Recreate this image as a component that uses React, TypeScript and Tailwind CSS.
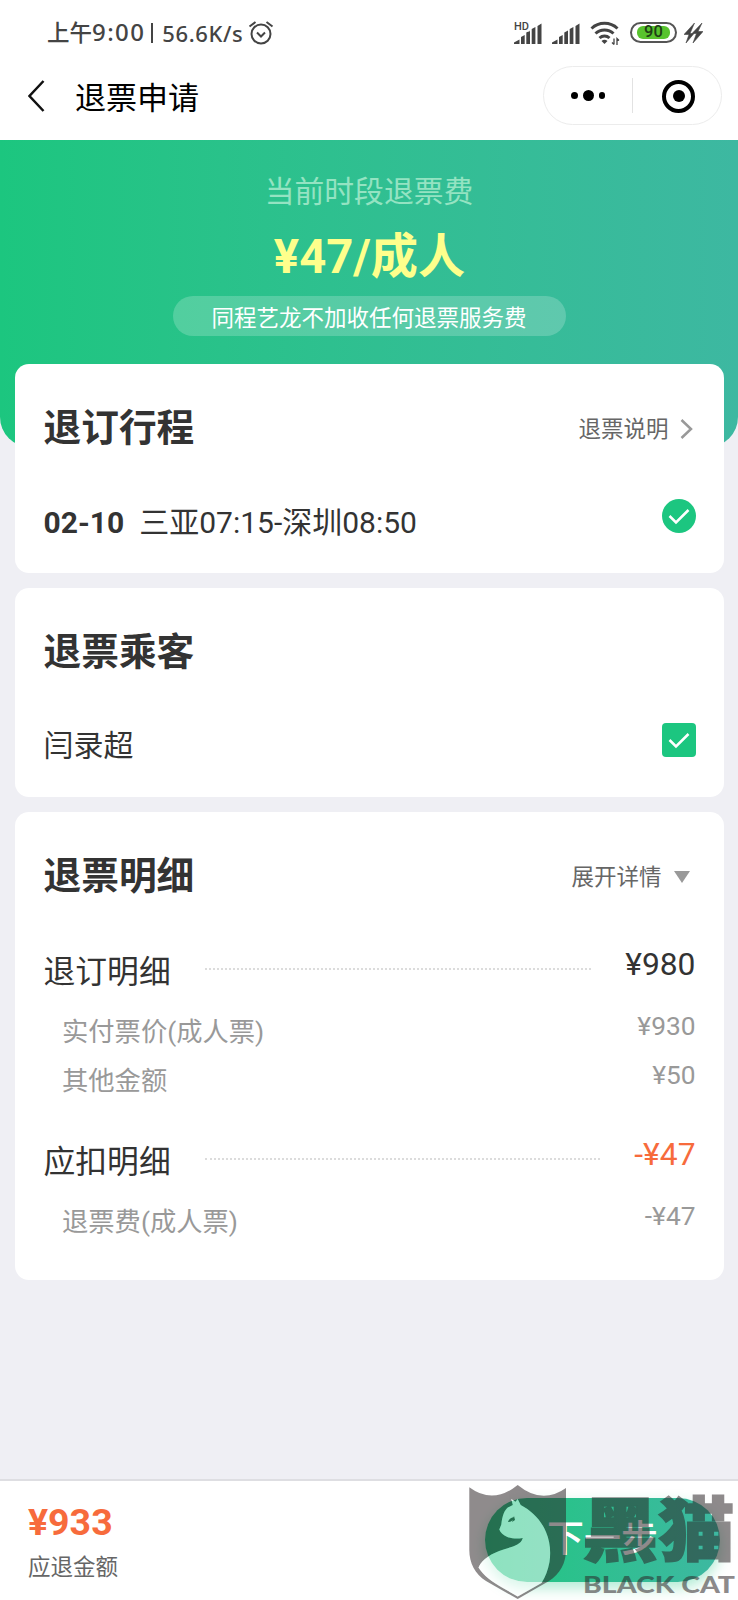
import type { ReactNode } from "react";

const CJK = "font-[Roboto,'Noto_Sans_CJK_SC',sans-serif]";

function SignalBars({ hd = false }: { hd?: boolean }) {
  return (
    <svg className="overflow-visible" width="28" height="24" viewBox="0 0 28 24" fill="#444">
      <path d="M0 23v-1.500L5.500 18.500V23zM7 23v-7l3.700-2V23zM12.300 23V11.500l3.700-2V23zM17.700 23V8l3.700-2V23zM23.500 23V5l4-2.500V23z" />
      {hd && (
        <>
          <rect x="0" y="0" width="15.500" height="10.500" fill="#fff" />
          <text x="0" y="9" fontSize="11" fontWeight="500" fontFamily="Roboto">HD</text>
        </>
      )}
    </svg>
  );
}

function StatusBar() {
  return (
    <div className="flex h-[62px] items-center justify-between pl-[47px] pr-[35px] pt-[3px] text-[#444]">
      <div className="flex items-center">
        <span className="flex items-center font-['Noto_Sans','Noto_Sans_CJK_SC',sans-serif] font-medium leading-none">
          <span className="text-[22.500px]">
            上午<span className="text-[24px] tracking-[1.4px]">9:00</span>
          </span>
          <span className="ml-[6px] mr-[9px] h-[20px] w-[2px] bg-[#444]" />
          <span className="text-[22px] tracking-[0.6px]">56.6K/s</span>
        </span>
        <svg className="ml-[5px]" width="26" height="26" viewBox="0 0 26 26" fill="none" stroke="#444" strokeWidth="2">
          <circle cx="13" cy="14" r="9.500" />
          <path d="M1.500 6.500 7.500 2M24.500 6.500 18.500 2M9 12.500l4 4 4-4" />
        </svg>
      </div>
      <div className="flex items-center">
        <SignalBars hd />
        <span className="w-[10px]" />
        <SignalBars />
        <svg className="ml-[10px]" width="30" height="24" viewBox="0 0 30 24" fill="none" stroke="#444" strokeWidth="3">
          <path d="M1.500 7.500a19 19 0 0 1 26 0M5.500 12.500a13 13 0 0 1 18 0M9.500 17a7.500 7.500 0 0 1 10 0" />
          <path d="M11.500 20q3-2.500 6 0l-3 3z" fill="#444" stroke="none" />
          <path d="M24 17.500v6M24 23.500l-2-2M27 24v-6.500l2 2" strokeWidth="1.300" />
        </svg>
        <div className="ml-2.5 flex h-[21px] w-[47px] items-center rounded-full border-2 border-[#555] p-[2px] px-[5px]">
          <div className="flex h-full w-full items-center justify-center rounded-[6px] bg-[#58c32e] font-[Roboto] text-[16.500px] font-medium leading-none text-[#1f3d16]">
            90
          </div>
        </div>
        <svg className="ml-[7px]" width="19" height="20" viewBox="0 0 19 20" fill="#444" stroke="#444" strokeWidth="0.600">
          <path d="M10.500 0 0 11.500h5L2 20l8-9.500H6z" />
          <path d="M18 0 8 10.500h4.500L9 20l10-11.500h-5z" />
        </svg>
      </div>
    </div>
  );
}

function NavBar() {
  return (
    <div className="flex h-[78px] items-start pl-7 pr-4">
      <svg className="mt-[18px]" width="17" height="32" viewBox="0 0 17 32" fill="none" stroke="#111" strokeWidth="2.500">
        <path d="M15.500 1 1.500 16l14 15" />
      </svg>
      <h1 className="ml-[30px] mt-[15px] text-[31px] leading-[44px] text-black">退票申请</h1>
      <div className="ml-auto mt-1 flex h-[59px] w-[179px] items-center rounded-full border border-[#ececec]">
        <div className="flex w-[88px] items-center justify-center gap-[5px]">
          <span className="size-[6.500px] rounded-full bg-black" />
          <span className="size-[11px] rounded-full bg-black" />
          <span className="size-[6.500px] rounded-full bg-black" />
        </div>
        <span className="h-[35px] w-px bg-[#e2e2e2]" />
        <div className="ml-[29px] mt-px flex size-[33px] items-center justify-center rounded-full border-4 border-black">
          <span className="size-[12px] rounded-full bg-black" />
        </div>
      </div>
    </div>
  );
}

function FeeBanner() {
  return (
    <div className="flex h-[307px] flex-col items-center rounded-b-[30px] bg-linear-to-r from-[#1cc67f] to-[#3db8a1]">
      <p className="mt-[30px] text-[29.800px] leading-[44px] text-[#94e3c2]">当前时段退票费</p>
      <p className="mt-[13px] pl-px text-[47.200px] font-bold leading-[60px] text-[#feff8c]">¥47/成人</p>
      <p className="mt-[9px] flex h-10 w-[393px] items-center justify-center rounded-full bg-white/20 pt-[5px] text-[22.500px] leading-none text-white">
        同程艺龙不加收任何退票服务费
      </p>
    </div>
  );
}

function Card({ title, action, className, children }: { title: string; action?: ReactNode; className: string; children: ReactNode }) {
  return (
    <section className={`rounded-[14px] bg-white pl-[28.500px] pr-[28.500px] ${className}`}>
      <div className="flex h-[127px] items-center justify-between">
        <h2 className="text-[37.700px] font-bold leading-[54px] text-[#333]">{title}</h2>
        {action}
      </div>
      {children}
    </section>
  );
}

function Check() {
  return (
    <svg width="34" height="34" viewBox="0 0 34 34" fill="none" stroke="#fff" strokeWidth="2.500">
      <path d="m7.500 17 6.500 6.500L26.500 11" />
    </svg>
  );
}

function TotalRow({ label, amount, accent = false }: { label: string; amount: string; accent?: boolean }) {
  return (
    <div className="flex h-[46px] items-start">
      <span className="text-[31.800px] leading-[51px] text-[#333]">{label}</span>
      <span className="ml-[34px] mr-[34px] mt-[21px] flex-1 border-t-2 border-dotted border-[#dcdcdc]" />
      <span className={`text-[31.800px] leading-[35px] ${accent ? "text-[#f76b3c]" : "text-[#333]"}`}>{amount}</span>
    </div>
  );
}

function SubRow({ label, amount }: { label: string; amount: string }) {
  return (
    <div className="flex h-[49px] items-start justify-between pl-[18.500px] text-[26.300px] text-[#999]">
      <span className="leading-[48px]">{label}</span>
      <span className="leading-[37px]">{amount}</span>
    </div>
  );
}

const CAT =
  "M45.300 18l4.200 2.700 2.200-2.700 3 6C66 30 75 39 80 51c4 9 5 20 3.500 30-1.500 8-4 15-8 21L51.700 115.500 36 106.500C26 101 17 94 12.500 86.500c4-9 13-14 25-18 9-3 17-4 19.300-11.500-6 1-11 .5-15.500-1-4-2-7-4-8-7.500l2-5c1-9 3-14 6.500-17l5-2.500z";

function BlackCatMark() {
  return (
    <svg className="absolute left-[466px] top-0 h-[119px] w-[272px]" viewBox="0 0 272 119">
      <g opacity=".53" fill="#2b2326">
        <path
          fillRule="evenodd"
          d={`M3.300 6.300Q27 24 51.700 4 76 24 100 7v62c0 13-6 24-17 31l-31.300 18L20 100C9 93 3.300 82 3.300 69z${CAT}`}
        />
        <text
          transform="translate(116 75) scale(1.090 1)"
          fontSize="70"
          fontWeight="900"
          fontFamily="'Noto Sans CJK SC', sans-serif"
          stroke="#2b2326"
          strokeWidth="1.500"
        >
          黑猫
        </text>
        <text
          x="117"
          y="112"
          fontSize="22.500"
          fontWeight="900"
          fontFamily="Lato, sans-serif"
          textLength="152"
          lengthAdjust="spacingAndGlyphs"
        >
          BLACK CAT
        </text>
      </g>
      <path fill="#fff" fillOpacity=".5" d={CAT} />
      <path fill="#23704f" d="M42 41q1-4 6-5-1 5-6 5zM48 35l1 4-3 2z" />
    </svg>
  );
}

function BottomBar() {
  return (
    <footer className="relative mt-auto flex h-[121px] shrink-0 justify-between overflow-hidden border-t-2 border-[#dedee2] bg-white pl-7 pr-[18px]">
      <div>
        <p className="mt-[19px] text-[37.500px] font-bold leading-[44px] text-[#f76b3c]">¥933</p>
        <p className="mt-[6px] text-[22.500px] leading-[34px] text-[#666]">应退金额</p>
      </div>
      <button className="mt-[17px] flex h-[84px] w-[235px] items-center justify-center rounded-full bg-linear-to-r from-[#1cc67f] to-[#3db8a1] text-[37px] font-medium text-white shadow-[0_6px_14px_rgba(29,198,128,.35)]">
        下一步
      </button>
      <BlackCatMark />
    </footer>
  );
}

export default function App() {
  return (
    <div className={`flex h-[1600px] w-[738px] flex-col overflow-hidden bg-[#efeff4] ${CJK}`}>
      <header className="bg-white">
        <StatusBar />
        <NavBar />
      </header>
      <FeeBanner />
      <main className="relative -mt-[83px] flex flex-col gap-[15px] pl-[15px] pr-[14px]">
        <Card
          title="退订行程"
          className="h-[209px]"
          action={
            <span className="flex items-center pr-[3px] pt-[5px] text-[22.500px] text-[#666]">
              退票说明
              <svg className="mb-0.5 ml-[11px]" width="13" height="20" viewBox="0 0 13 20" fill="none" stroke="#999" strokeWidth="2.500">
                <path d="m1.500 1 9.500 9-9.500 9" />
              </svg>
            </span>
          }
        >
          <div className="flex items-start justify-between text-[30px] text-[#333]">
            <p className="mt-[9px] leading-[46px]">
              <b className="mr-[15px]">02-10</b>三亚07:15-深圳08:50
            </p>
            <span className="mt-[8px] rounded-full bg-[#1cc680]">
              <Check />
            </span>
          </div>
        </Card>
        <Card title="退票乘客" className="h-[209px]">
          <div className="flex items-start justify-between text-[30px] text-[#333]">
            <p className="mt-[8px] leading-[46px]">闫录超</p>
            <span className="mt-[8px] rounded-[4px] bg-[#1cc680]">
              <Check />
            </span>
          </div>
        </Card>
        <Card
          title="退票明细"
          className="h-[468px]"
          action={
            <span className="flex items-center pr-[6px] pt-[5px] text-[22.500px] text-[#666]">
              展开详情
              <svg className="mb-0.5 ml-3" width="16" height="12" viewBox="0 0 16 12" fill="#999">
                <path d="M0 0h16L8 12z" />
              </svg>
            </span>
          }
        >
          <div className="pt-[8px]">
            <TotalRow label="退订明细" amount="¥980" />
            <div className="mb-[31px] mt-[15px]">
              <SubRow label="实付票价(成人票)" amount="¥930" />
              <SubRow label="其他金额" amount="¥50" />
            </div>
            <TotalRow label="应扣明细" amount="-¥47" accent />
            <div className="mt-[15px]">
              <SubRow label="退票费(成人票)" amount="-¥47" />
            </div>
          </div>
        </Card>
      </main>
      <BottomBar />
    </div>
  );
}
